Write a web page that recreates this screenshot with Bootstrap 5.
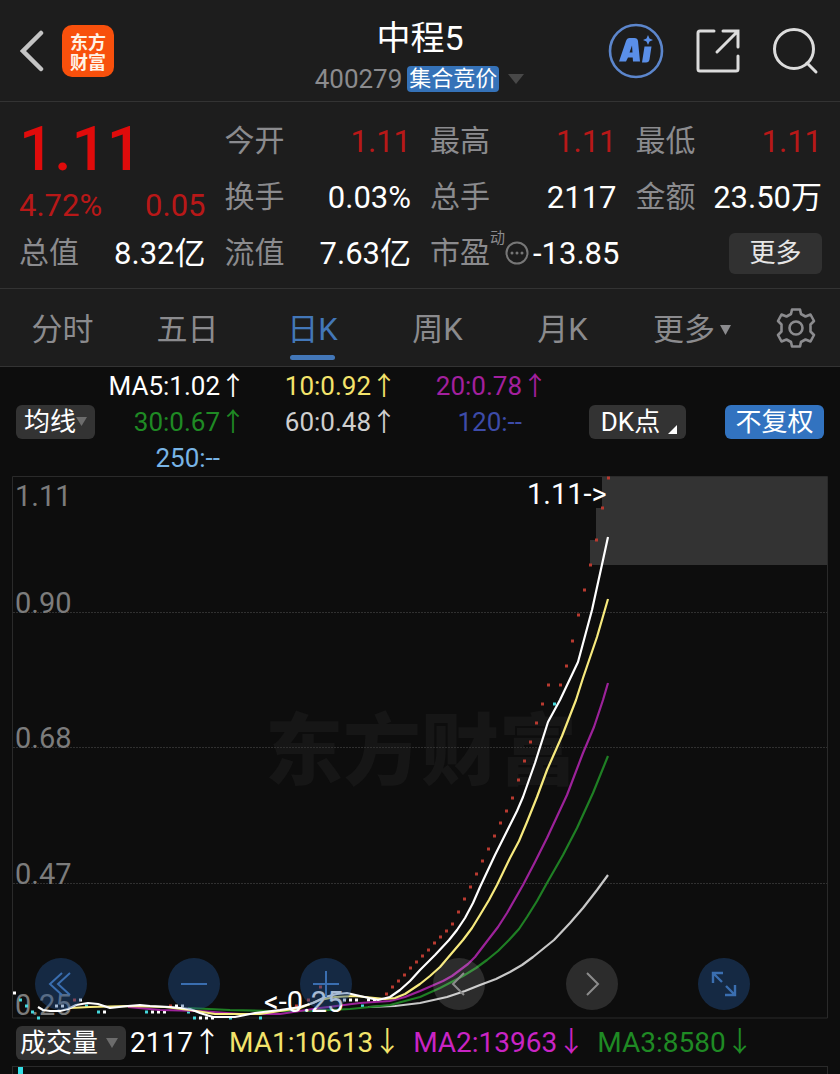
<!DOCTYPE html>
<html lang="zh-CN" data-bs-theme="dark">
<head>
<meta charset="utf-8">
<meta name="viewport" content="width=device-width, initial-scale=1">
<title>中程5 400279</title>
<link href="https://cdn.jsdelivr.net/npm/bootstrap@5.3.0/dist/css/bootstrap.min.css" rel="stylesheet">
<style>
  body { background: #0d0d0d; color: #fff; font-family: Roboto, "Noto Sans CJK SC", sans-serif; line-height: 1; }
  button { font-family: inherit; line-height: 1; color: inherit; background: none; border: 0; padding: 0; }
  svg { display: block; }
  .panel { background: #1d1d1d; border-bottom: 1px solid #333; }
  .muted { color: #8b8b8e; }
  .rise { color: #b81818; }
  .topbar { height: 102px; padding: 0 20px; }
  .topbar .side { flex: 1 1 0; }
  .topbar .actions { gap: 31px; }
  .brand { width: 52px; height: 52px; margin-left: 17px; border-radius: 10px; background: #f8500c; font: 700 18px/20px "Noto Sans CJK SC", sans-serif; color: #fff3e6; }
  .stock { font-size: 34px; line-height: 40px; font-weight: 400; }
  .code { font-size: 26px; }
  .auction { background: #3572b8; border-radius: 4px; font-size: 22px; line-height: 26px; padding: 0 2px; margin: 0 8px 0 5px; }
  .quote { height: 187px; padding: 11px 18px 0 19px; display: grid; grid-template-columns: repeat(4, minmax(0, 1fr)); column-gap: 19px; }
  .cell { height: 56px; display: flex; align-items: center; justify-content: space-between; white-space: nowrap; font-size: 31px; }
  .cell .key { font-size: 30px; color: #8b8b8e; }
  .price { height: 72px; line-height: 72px; font-size: 62px; font-weight: 500; color: #e00b0b; }
  .change { height: 40px; }
  .cell .dyn { font-size: 15px; align-self: flex-start; padding-top: 6px; }
  .more-btn { width: 93px; height: 41px; border-radius: 6px; background: #313131; color: #e6e6e6; font-size: 26px; }
  .periods { height: 78px; display: grid; grid-template-columns: repeat(5, 125fr) 135fr 80fr; font-size: 31px; }
  .periods button { position: relative; color: #8b8b8e; display: flex; align-items: center; justify-content: center; }
  .periods .label { padding-top: 4px; }
  .periods .on { color: #4377b8; }
  .periods .on::after { content: ""; position: absolute; bottom: 6px; width: 45px; height: 5px; border-radius: 3px; background: #4377b8; }
  .legend { height: 109px; padding: 0 16px; }
  .chip { height: 34px; border-radius: 6px; background: #333; font-size: 26px; white-space: nowrap; display: flex; align-items: center; justify-content: center; }
  .chip.dk { width: 97px; margin-left: 41px; }
  .chip.blue { background: #3273c0; width: 99px; margin-left: 39px; }
  .avg { display: grid; grid-template-columns: repeat(3, 1fr); line-height: 36px; font-size: 26px; text-align: right; white-space: nowrap; }
  .avg .blank { padding-right: 26px; }
  .chart { position: relative; }
  .chart svg.plot { width: 100%; height: auto; overflow: visible; }
  .tools { position: absolute; left: 4.2%; right: 10.7%; bottom: 9px; }
  .tool { width: 52px; height: 52px; border-radius: 50%; background: rgba(36, 86, 150, .4); color: #3a6eb0; display: flex; align-items: center; justify-content: center; }
  .tool.grey { background: rgba(255, 255, 255, .13); color: #8c8c8c; }
  .volume { height: 47px; padding: 0 16px; font-size: 28px; white-space: nowrap; }
  .volplot { height: 8px; margin: 0 12px; border: 1px solid #2a2a2a; border-bottom: 0; padding-left: 5px; }
  .volbar { width: 5px; height: 7px; background: #35dfe6; }
  .c-yellow { color: #f3e36b; } .c-magenta { color: #a3209e; } .c-green { color: #1f8a24; }
  .c-silver { color: #cfcfcf; } .c-indigo { color: #3d4ba8; } .c-sky { color: #78b4e6; } .c-pink { color: #c924c4; }
</style>
</head>
<body>
<header class="panel topbar d-flex align-items-center">
  <div class="side d-flex align-items-center">
    <button aria-label="返回"><svg width="25" height="42" viewBox="0 0 25 42" fill="none" stroke="#c4c4c4" stroke-width="4.500" stroke-linecap="round"><path d="M21 3 3 21l18 18"/></svg></button>
    <div class="brand d-flex flex-column align-items-center justify-content-center"><span>东方</span><span>财富</span></div>
  </div>
  <div class="text-center pt-2">
    <h1 class="stock m-0">中程5</h1>
    <div class="d-flex align-items-center muted mt-2"><span class="code">400279</span><span class="auction text-white">集合竞价</span>
      <svg width="18" height="12" fill="#484848"><path d="M1 1h16L9 11z"/></svg></div>
  </div>
  <div class="side actions d-flex align-items-center justify-content-end">
    <button aria-label="AI"><svg width="56" height="56" viewBox="0 0 56 56"><circle cx="28" cy="28" r="26" fill="none" stroke="#5c86cc" stroke-width="2.600"/><g fill="#5a8fe8"><path fill-rule="evenodd" d="M11 38.500 18 18q1-3 3.500-3h5q3 0 3.500 3l2 20.500h-7l-.3-4h-4.700l-2 4zM21.500 29.500h3l-.5-7z"/><path d="M36.500 23.500h7l-2 13q-.4 3-3.500 3h-4zM40 12l1.500 3.500 3.500 1.500-3.500 1.500-1.500 3.500-1.500-3.500L35 17l3.500-1.500z"/></g></svg></button>
    <button aria-label="分享"><svg width="46" height="46" viewBox="0 0 46 46" fill="none" stroke="#dcdcdc" stroke-width="3"><path d="M19 3H5q-2 0-2 2v36q0 2 2 2h36q2 0 2-2V28M28 3h15v16M43 3 22 24" stroke-linecap="round"/></svg></button>
    <button aria-label="搜索"><svg width="48" height="48" viewBox="0 0 48 48" fill="none" stroke="#dcdcdc" stroke-width="3" stroke-linecap="round"><circle cx="22" cy="22" r="19.500"/><path d="m35 36 9 9"/></svg></button>
  </div>
</header>

<section class="panel quote">
  <div>
    <div class="price">1.11</div>
    <div class="cell change rise"><span>4.72%</span><span>0.05</span></div>
    <div class="cell"><span class="key">总值</span><span>8.32亿</span></div>
  </div>
  <div>
    <div class="cell"><span class="key">今开</span><span class="rise">1.11</span></div>
    <div class="cell"><span class="key">换手</span><span>0.03%</span></div>
    <div class="cell"><span class="key">流值</span><span>7.63亿</span></div>
  </div>
  <div>
    <div class="cell"><span class="key">最高</span><span class="rise">1.11</span></div>
    <div class="cell"><span class="key">总手</span><span>2117</span></div>
    <div class="cell"><span class="key">市盈</span><span class="dyn muted">动</span><svg class="flex-shrink-0" width="24" height="24" viewBox="0 0 24 24" fill="#777"><circle cx="12" cy="12" r="10.500" fill="none" stroke="#777" stroke-width="2"/><circle cx="7" cy="12" r="1.500"/><circle cx="12" cy="12" r="1.500"/><circle cx="17" cy="12" r="1.500"/></svg><span class="ms-1">-13.85</span></div>
  </div>
  <div>
    <div class="cell"><span class="key">最低</span><span class="rise">1.11</span></div>
    <div class="cell"><span class="key">金额</span><span>23.50万</span></div>
    <div class="cell justify-content-end"><button class="more-btn">更多</button></div>
  </div>
</section>

<nav class="panel periods">
  <button class="label">分时</button>
  <button class="label">五日</button>
  <button class="label on">日K</button>
  <button class="label">周K</button>
  <button class="label">月K</button>
  <button class="label">更多<svg class="ms-1" width="13" height="12" fill="currentColor"><path d="M1 1h11L6.500 11z"/></svg></button>
  <button class="pe-2" aria-label="设置"><svg width="42" height="42" viewBox="-21 -21 42 42" fill="none" stroke="currentColor" stroke-width="2.600" stroke-linejoin="round"><path d="M-4-18.500H4L5-14 9.500-11.500 14.500-13.500 18-7 14.500-3.500V3.500L18 7 14.500 13.500 9.500 11.500 5 14 4 18.500H-4L-5 14-9.500 11.500-14.500 13.500-18 7-14.500 3.500V-3.500L-18-7-14.500-13.500-9.500-11.500-5-14z"/><circle r="6.500"/></svg></button>
</nav>

<section class="legend d-flex align-items-center">
  <button class="chip px-2">均线<svg width="11" height="10" fill="#6c6c6c"><path d="M0 0h11L5.500 9z"/></svg></button>
  <div class="avg flex-grow-1">
    <span>MA5:1.02↑</span><span class="c-yellow">10:0.92↑</span><span class="c-magenta">20:0.78↑</span>
    <span class="c-green">30:0.67↑</span><span class="c-silver">60:0.48↑</span><span class="blank c-indigo">120:--</span>
    <span class="blank c-sky">250:--</span>
  </div>
  <button class="chip dk ps-1">DK点<svg class="ms-2 mt-3" width="10" height="10" fill="#fff"><path d="M9 0v9H0z"/></svg></button>
  <button class="chip blue">不复权</button>
</section>

<section class="chart">
  <svg class="plot" viewBox="0 476 840 543" role="img" aria-label="日K线图">
    <text x="265" y="779" font-size="78" font-weight="900" fill="#161616">东方财富</text>
    <path d="M602 477H827V565H590V540H596V508H602z" fill="#333"/>
    <path d="M12.500 476.500H827.500V1018H12.500z" fill="none" stroke="#2a2a2a"/>
    <path d="M13 612.500H827M13 747.500H827M13 883.500H827" stroke="#303030" stroke-dasharray="2 1"/>
    <g font-size="29" fill="#7c7c7c">
      <text x="15" y="506">1.11</text><text x="15" y="613">0.90</text><text x="15" y="748">0.68</text><text x="15" y="884">0.47</text><text x="15" y="1015">0.25</text>
    </g>
    <g fill="none" stroke-width="3">
      <path stroke="#b83a30" d="M607 478h3M601 508h3M595 540h3M589 565h3M583 590h3M577 615h3M571 641h3M565 666h3M559 685h3M547 685h3M541 704h3M535 723h3M529 742h3M523 761h3M517 780h3M511 798h3M505 811h3M499 823h3M493 836h3M487 849h3M481 861h3M475 874h3M469 887h3M463 899h3M457 912h3M451 924h3M445 931h3M439 937h3M433 943h3M427 950h3M421 956h3M415 962h3M409 968h3M403 975h3M397 981h3M391 987h3M385 994h3M73 1000h3M169 1006h3M295 1006h3M307 1000h3M319 987h3"/>
      <path stroke="#45d8dc" d="M553 704h3M19 1000h3M25 1006h3M31 1012h3M37 1018h3M85 1006h3M97 1012h3M145 1012h3M187 1012h3M193 1018h3M229 1018h3M259 1018h3M361 1006h3"/>
      <path stroke="#fff" d="M13 993h3M55 1006h3M61 1006h3M79 1000h3M103 1012h3M151 1012h3M157 1012h3M163 1012h3M175 1006h3M181 1006h3M199 1018h3M205 1018h3M211 1018h3M343 1000h3M349 1000h3M355 1000h3M367 1000h3M373 1000h3"/>
    </g>
    <g fill="none" stroke-width="2.200" stroke-linejoin="round">
      <polyline stroke="#c8c8c8" points="368,1007 395,1006 420,1003 447,997 465,991 480,985 496,979 510,972 522,965 533,957 554,940 570,923 583,908 597,890 608,875"/>
      <polyline stroke="#1f7f24" points="188,1008 230,1010 270,1011 310,1011 350,1009 390,1005 420,997 440,988 463,976 476,968 487,960 498,951 509,940 519,929 527,917 537,901 547,883 563,855 577,828 593,793 608,756"/>
      <polyline stroke="#9c229a" points="128,1007 160,1010 200,1011 240,1014 280,1014 320,1008 360,1003 390,1001 405,997 420,991 443,981 452,976 460,970 468,964 475,957 488,940 498,927 507,913 523,885 535,862 547,838 567,795 583,753 594,727 603,700 608,683"/>
      <polyline stroke="#f7ea7e" points="70,1008 90,1007 128,1006 165,1007 190,1010 215,1014 260,1014 300,1008 320,1000 335,997 355,996 385,999 395,998 405,994 420,984 430,976 440,967 463,940 472,928 480,915 489,900 497,885 510,858 519,841 527,822 537,797 547,770 562,736 576,700 583,678 597,637 608,599"/>
      <polyline stroke="#fff" points="38,1007 43,1010 50,1011 60,1011 68,1009 76,1005 88,1003 98,1004 110,1008 128,1006 140,1005 150,1006 170,1007 190,1009 200,1013 213,1017 235,1017 255,1013 280,1010 300,1007 313,1003 325,997 337,994 347,993 360,996 378,1000 390,997 400,990 410,981 420,970 435,955 449,940 457,930 465,918 473,903 480,887 495,855 510,825 517,811 523,797 535,763 548,722 560,700 578,662 592,610 603,560 608,537"/>
    </g>
    <g font-size="29" fill="#fff"><text x="527" y="504">1.11-&gt;</text><text x="264" y="1012">&lt;-0.25</text></g>
  </svg>
  <div class="tools d-flex justify-content-between">
    <button class="tool" aria-label="最早"><svg width="26" height="26" fill="none" stroke="currentColor" stroke-width="2"><path d="M14 2 2 13l12 11M22 2 10 13l12 11"/></svg></button>
    <button class="tool" aria-label="缩小"><svg width="26" height="26" stroke="currentColor" stroke-width="2"><path d="M0 13h26"/></svg></button>
    <button class="tool" aria-label="放大"><svg width="26" height="26" stroke="currentColor" stroke-width="2"><path d="M0 13h26M13 0v26"/></svg></button>
    <button class="tool grey" aria-label="向左"><svg width="26" height="26" fill="none" stroke="currentColor" stroke-width="2"><path d="M18 2 7 13l11 11"/></svg></button>
    <button class="tool grey" aria-label="向右"><svg width="26" height="26" fill="none" stroke="currentColor" stroke-width="2"><path d="M8 2l11 11L8 24"/></svg></button>
    <button class="tool" aria-label="全屏"><svg width="26" height="26" fill="none" stroke="currentColor" stroke-width="2.400"><path d="M12 2H2v10M2 2l9 9M14 24h10V14M24 24l-9-9"/></svg></button>
  </div>
</section>

<section class="volume d-flex align-items-center">
  <button class="chip ps-1 pe-2 me-1">成交量<svg class="ms-2" width="12" height="10" fill="#6c6c6c"><path d="M0 0h12L6 10z"/></svg></button>
  <span>2117↑</span><span class="ms-2 c-yellow">MA1:10613↓</span><span class="ms-2 ps-1 c-pink">MA2:13963↓</span><span class="ms-2 ps-1 c-green">MA3:8580↓</span>
</section>
<div class="volplot"><div class="volbar"></div></div>
<script src="https://cdn.jsdelivr.net/npm/bootstrap@5.3.0/dist/js/bootstrap.bundle.min.js"></script>
</body>
</html>
